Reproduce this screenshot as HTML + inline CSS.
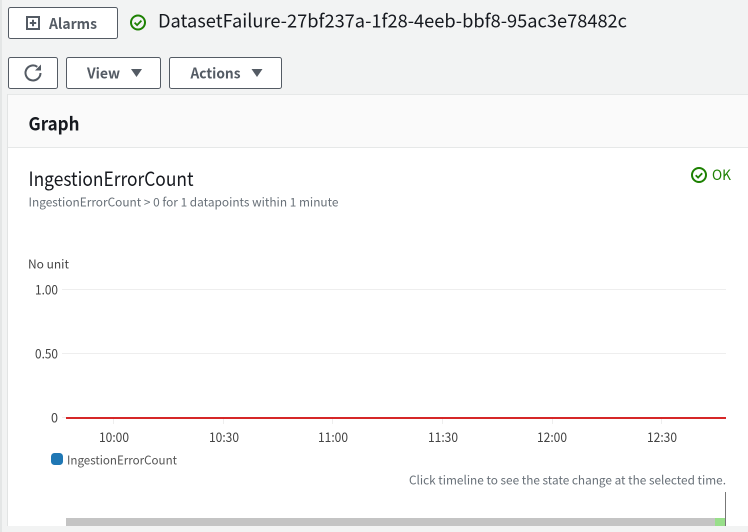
<!DOCTYPE html>
<html lang="en">
<head>
<meta charset="utf-8">
<title>Alarm</title>
<style>
html,body{margin:0;padding:0;width:748px;height:532px;overflow:hidden;background:#f2f3f3}
svg{display:block}
text{font-family:"Noto Sans CJK JP","DejaVu Sans","Liberation Sans",sans-serif}
</style>
</head>
<body>
<svg width="748" height="532" viewBox="0 0 748 532" xmlns="http://www.w3.org/2000/svg">
<rect width="748" height="532" fill="#f2f3f3"/>
<rect x="0" y="0" width="2" height="532" fill="#e4e6e6"/>
<!-- Panel -->
<rect x="7.5" y="94" width="741" height="432" fill="#fff"/>
<rect x="7" y="94" width="741" height="54" fill="#fafafa"/>
<rect x="7" y="94" width="741" height="1" fill="#e6e8e8"/>
<rect x="7" y="147" width="741" height="1" fill="#e6e8e8"/>
<rect x="7" y="94" width="1" height="432" fill="#e2e4e4"/>
<!-- Buttons -->
<g fill="#fff" stroke="#545b64" stroke-width="1">
<rect x="8.5" y="7.5" width="109" height="31" rx="2"/>
<rect x="8.5" y="57.5" width="49" height="31" rx="2"/>
<rect x="66.5" y="57.5" width="94" height="31" rx="2"/>
<rect x="169.5" y="57.5" width="112" height="31" rx="2"/>
</g>
<!-- Alarms icon -->
<rect x="27" y="17" width="12" height="12" fill="none" stroke="#545b64" stroke-width="2"/>
<path d="M33 19.800v6.400M29.800 23h6.400" stroke="#545b64" stroke-width="2" fill="none"/>
<text x="49" y="29" font-size="14.500" font-weight="700" fill="#545b64" textLength="48" lengthAdjust="spacingAndGlyphs">Alarms</text>
<!-- Title status -->
<circle cx="138" cy="22.500" r="7" fill="none" stroke="#1d8102" stroke-width="2"/>
<path d="M134.600 22.600l2.500 2.500 4.300-4.500" fill="none" stroke="#1d8102" stroke-width="1.800"/>
<text x="158" y="27.500" font-size="18.500" fill="#16191f" textLength="469" lengthAdjust="spacingAndGlyphs">DatasetFailure-27bf237a-1f28-4eeb-bbf8-95ac3e78482c</text>
<!-- Refresh -->
<path d="M40.500 73A7.500 7.500 0 1 1 37.300 66.800" fill="none" stroke="#545b64" stroke-width="2"/>
<path d="M41 64.500v6h-6z" fill="#545b64"/>
<!-- View -->
<text x="87" y="78.500" font-size="14.500" font-weight="700" fill="#545b64" textLength="33" lengthAdjust="spacingAndGlyphs">View</text>
<path d="M131 69h11l-5.500 8z" fill="#545b64"/>
<!-- Actions -->
<text x="190.500" y="78.500" font-size="14.500" font-weight="700" fill="#545b64" textLength="50" lengthAdjust="spacingAndGlyphs">Actions</text>
<path d="M251.500 69h11l-5.500 8z" fill="#545b64"/>
<!-- Graph heading -->
<text x="28.500" y="130.500" font-size="18.500" font-weight="700" fill="#16191f" textLength="51" lengthAdjust="spacingAndGlyphs">Graph</text>
<!-- Title -->
<text x="28.500" y="186" font-size="19.500" fill="#16191f" textLength="165" lengthAdjust="spacingAndGlyphs">IngestionErrorCount</text>
<text x="28.500" y="206.500" font-size="12" fill="#687078" textLength="310" lengthAdjust="spacingAndGlyphs">IngestionErrorCount &gt; 0 for 1 datapoints within 1 minute</text>
<!-- OK -->
<circle cx="699" cy="175" r="7" fill="none" stroke="#1d8102" stroke-width="2"/>
<path d="M695.700 175.200l2.400 2.400 4.100-4.400" fill="none" stroke="#1d8102" stroke-width="1.800"/>
<text x="712" y="180" font-size="14.500" fill="#1d8102" textLength="19" lengthAdjust="spacingAndGlyphs">OK</text>
<!-- Chart -->
<text x="28" y="268.500" font-size="12" fill="#444" textLength="41" lengthAdjust="spacingAndGlyphs">No unit</text>
<g fill="#444" font-size="13">
<text x="35" y="294.500" textLength="23" lengthAdjust="spacingAndGlyphs">1.00</text>
<text x="35" y="358.500" textLength="23" lengthAdjust="spacingAndGlyphs">0.50</text>
<text x="51" y="422.500" textLength="7" lengthAdjust="spacingAndGlyphs">0</text>
</g>
<g fill="#eeeeee">
<rect x="62" y="289" width="664" height="1"/>
<rect x="62" y="353" width="664" height="1"/>
<rect x="62" y="417" width="4" height="1"/>
<rect x="113" y="419" width="1" height="5"/>
<rect x="223" y="419" width="1" height="5"/>
<rect x="332" y="419" width="1" height="5"/>
<rect x="442" y="419" width="1" height="5"/>
<rect x="552" y="419" width="1" height="5"/>
<rect x="661" y="419" width="1" height="5"/>
</g>
<rect x="66" y="417" width="660" height="2" fill="#d62728"/>
<g fill="#444" font-size="13" text-anchor="middle">
<text x="114" y="442" textLength="30" lengthAdjust="spacingAndGlyphs">10:00</text>
<text x="224" y="442" textLength="30" lengthAdjust="spacingAndGlyphs">10:30</text>
<text x="333" y="442" textLength="30" lengthAdjust="spacingAndGlyphs">11:00</text>
<text x="443" y="442" textLength="30" lengthAdjust="spacingAndGlyphs">11:30</text>
<text x="552" y="442" textLength="30" lengthAdjust="spacingAndGlyphs">12:00</text>
<text x="662" y="442" textLength="30" lengthAdjust="spacingAndGlyphs">12:30</text>
</g>
<rect x="51" y="453" width="12" height="12" rx="3.500" fill="#1f77b4"/>
<text x="67" y="464.500" font-size="12" fill="#555" textLength="110" lengthAdjust="spacingAndGlyphs">IngestionErrorCount</text>
<text x="409" y="484.500" font-size="12" fill="#687078" textLength="317" lengthAdjust="spacingAndGlyphs">Click timeline to see the state change at the selected time.</text>
<!-- Timeline -->
<rect x="66" y="518" width="649" height="8" fill="#c4c4c4"/>
<rect x="715" y="518" width="10" height="8" fill="#98df8a"/>
<rect x="725" y="492" width="1" height="34" fill="#777"/>
</svg>
</body>
</html>
